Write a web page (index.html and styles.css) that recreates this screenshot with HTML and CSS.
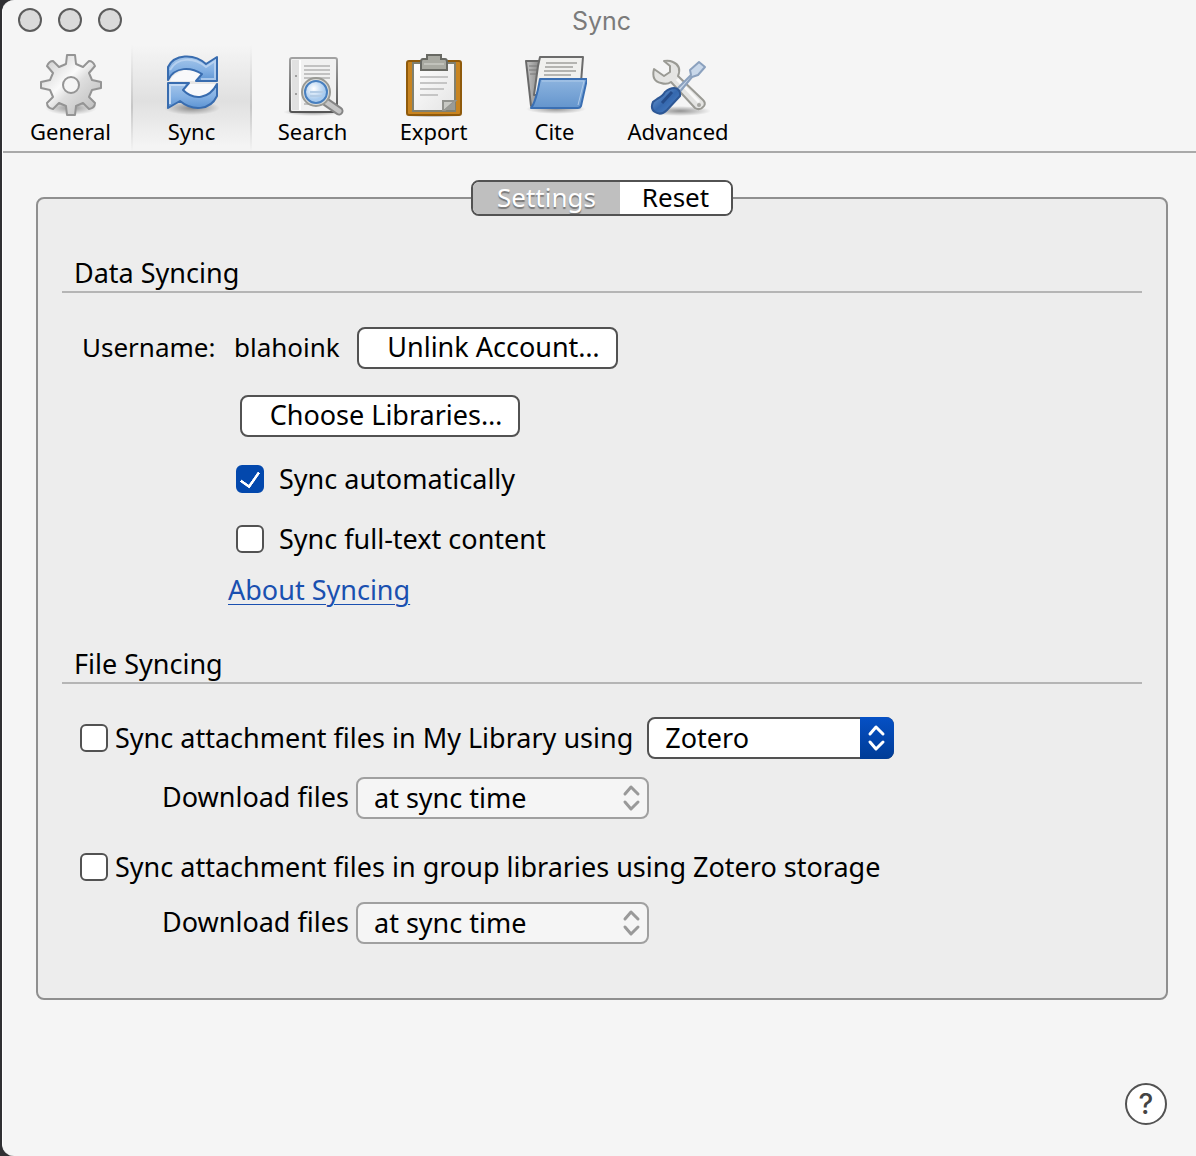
FILE: index.html
```
<!DOCTYPE html>
<html lang="en">
<head>
<meta charset="utf-8">
<meta name="viewport" content="width=device-width, initial-scale=1">
<title>Sync</title>
<link rel="stylesheet" href="styles.css">
</head>
<body>
<div class="window">
  <header class="header">
    <div class="titlebar">
      <div class="lights">
        <button class="light" type="button" aria-label="Close"></button>
        <button class="light" type="button" aria-label="Minimize"></button>
        <button class="light" type="button" aria-label="Zoom"></button>
      </div>
      <h1 class="title">Sync</h1>
    </div>
    <nav class="toolbar">
      <button class="tool" type="button">
        <svg class="tool-icon" viewBox="0 0 64 64" aria-hidden="true">
          <defs>
            <linearGradient id="gear" x1="0" y1="0" x2="1" y2="1"><stop offset="0.15" stop-color="#d8d8d8"/><stop offset="0.42" stop-color="#fafafa"/><stop offset="0.55" stop-color="#dedede"/><stop offset="0.85" stop-color="#c4c4c4"/></linearGradient>
            <radialGradient id="shade"><stop offset="0" stop-color="#000" stop-opacity="0.4"/><stop offset="1" stop-color="#000" stop-opacity="0"/></radialGradient>
          </defs>
          <ellipse cx="32" cy="55" rx="26" ry="7" fill="url(#shade)"/>
          <path fill="url(#gear)" fill-rule="evenodd" stroke="#949494" stroke-width="2" stroke-linejoin="round" d="M28 2H36L37 11L44 14L50 8Q54 8 56 13L50 20L53 27L62 29V35L53 37L50 44L56 50Q56 55 50 56L44 50L37 53L36 62H28L27 53L20 50L14 56Q8 55 8 50L14 44L11 37L2 35V29L11 27L14 20L8 13Q10 8 14 8L20 14L27 11ZM32 24A8 8 0 1 0 32 40A8 8 0 1 0 32 24Z"/>
        </svg>
        <span>General</span>
      </button>
      <button class="tool tool-selected" type="button" aria-current="page">
        <svg class="tool-icon" viewBox="0 0 64 64" aria-hidden="true">
          <defs>
            <linearGradient id="arrow" x1="0" y1="0" x2="0" y2="1"><stop offset="0" stop-color="#a5c6ea"/><stop offset="0.55" stop-color="#83b0e3"/><stop offset="1" stop-color="#5d94d3"/></linearGradient>
          </defs>
          <ellipse cx="32" cy="55" rx="28" ry="7" fill="url(#shade)"/>
          <path d="M20 19Q32 12 42 21L36 28H10Q12 22 20 19ZM23 37L29 31H56Q53 39 44 43Q32 46 23 37Z" fill="#f8f9fb"/>
          <path d="M8 27V14C14 1 34 0 46 11L57 4V28H36L42 21C31 14 15 13 8 27Z" fill="url(#arrow)" stroke="#386caf" stroke-width="2" stroke-linejoin="round"/>
          <path d="M10 17C17 4 34 4 46 14L55 8V26H41" fill="none" stroke="#c4daf3" stroke-opacity="0.7" stroke-width="2"/>
          <path d="M57 31V43C50 58 32 58 20 48L8 55V30H29L23 37C34 48 49 46 57 31Z" fill="url(#arrow)" stroke="#386caf" stroke-width="2" stroke-linejoin="round"/>
          <path d="M10 51V32H25" fill="none" stroke="#c4daf3" stroke-width="2"/>
        </svg>
        <span>Sync</span>
      </button>
      <button class="tool" type="button">
        <svg class="tool-icon" viewBox="0 0 64 64" aria-hidden="true">
          <defs>
            <linearGradient id="pageEdge" x1="0" y1="0" x2="0" y2="1"><stop offset="0" stop-color="#a2a2a2"/><stop offset="1" stop-color="#555"/></linearGradient>
            <radialGradient id="lens" cx="0.4" cy="0.35"><stop offset="0" stop-color="#fff"/><stop offset="1" stop-color="#a9cbee"/></radialGradient>
          </defs>
          <ellipse cx="32" cy="59" rx="30" ry="4" fill="url(#shade)"/>
          <rect x="9" y="5" width="47" height="54" rx="2" fill="#f1f1f1" stroke="url(#pageEdge)" stroke-width="2"/>
          <path d="M11 7H18V57H11Z" fill="#e1e1e1"/>
          <path d="M19 7V57" stroke="#fff" stroke-width="2"/>
          <circle cx="15" cy="23" r="1" fill="#888"/><circle cx="15" cy="41" r="1" fill="#888"/>
          <path d="M23 13H49M23 17H49M23 21H49M23 25H49M23 51H42" stroke="#c2c2c2" stroke-width="2"/>
          <path d="M45 49L58 58" stroke="#858585" stroke-width="9" stroke-linecap="round"/>
          <path d="M45 49L58 58" stroke="#c5c5c5" stroke-width="5" stroke-linecap="round"/>
          <circle cx="35" cy="39" r="14" fill="#ddddd9" stroke="#999a95" stroke-width="2"/>
          <circle cx="35" cy="39" r="11" fill="url(#lens)" stroke="#477fbf" stroke-width="2"/>
          <path d="M29 39H42M29 43H41" stroke="#b4cce5" stroke-width="2"/>
        </svg>
        <span>Search</span>
      </button>
      <button class="tool" type="button">
        <svg class="tool-icon" viewBox="0 0 64 64" aria-hidden="true">
          <defs>
            <linearGradient id="sheet" x1="0" y1="0" x2="1" y2="1"><stop offset="0" stop-color="#fff"/><stop offset="1" stop-color="#e4e4e4"/></linearGradient>
          </defs>
          <ellipse cx="32" cy="62" rx="30" ry="3" fill="url(#shade)"/>
          <rect x="5" y="8" width="54" height="54" rx="2" fill="#c88420" stroke="#8f5a0b" stroke-width="2"/>
          <path d="M11 10H53V58H11Z" fill="url(#sheet)" stroke="#80806f" stroke-width="2"/>
          <path d="M18 24H46M18 30H45M18 36H42M18 42H36" stroke="#c5c5c5" stroke-width="2"/>
          <path d="M41 57V48H53L43 57Z" fill="#c8c9c4" stroke="#92938e" stroke-width="2"/>
          <path d="M42 57L53 48V57Z" fill="#9a9b96"/>
          <path d="M25 2H39V6H43Q45 6 45 9V17H19V9Q19 6 21 6H25Z" fill="#a9aaa2" stroke="#686963" stroke-width="2"/>
          <path d="M22 11H42" stroke="#c1c2bb" stroke-width="2"/>
        </svg>
        <span>Export</span>
      </button>
      <button class="tool" type="button">
        <svg class="tool-icon" viewBox="0 0 64 64" aria-hidden="true">
          <defs>
            <linearGradient id="folder" x1="0" y1="0" x2="0" y2="1"><stop offset="0" stop-color="#8db4df"/><stop offset="1" stop-color="#6495cd"/></linearGradient>
            <linearGradient id="folderBack" x1="0" y1="0" x2="1" y2="0"><stop offset="0" stop-color="#c6c6c6"/><stop offset="1" stop-color="#777"/></linearGradient>
          </defs>
          <ellipse cx="33" cy="56" rx="30" ry="5" fill="url(#shade)"/>
          <path d="M3 8H20V53H8Z" fill="url(#folderBack)" stroke="#686868" stroke-width="2" stroke-linejoin="round"/>
          <path d="M6 13H15M6 17H14M7 21H13" stroke="#777"/>
          <path d="M17 4H60L57 42H11L15 13Z" fill="#f0f0ee" stroke="#6b6b6b" stroke-width="2" stroke-linejoin="round"/>
          <path d="M23 10H54M22 14H50M21 18H53M21 22H48" stroke="#b4b4b1" stroke-width="2"/>
          <path d="M17 26H64L58 53Q57 55 55 55H8Q13 49 17 26Z" fill="url(#folder)" stroke="#3a6fb3" stroke-width="2" stroke-linejoin="round"/>
          <path d="M19 28H61L55 52" fill="none" stroke="#afcbea" stroke-width="1"/>
        </svg>
        <span>Cite</span>
      </button>
      <button class="tool tool-wide" type="button">
        <svg class="tool-icon" viewBox="0 0 64 64" aria-hidden="true">
          <defs>
            <linearGradient id="handle" x1="0" y1="0" x2="1" y2="1"><stop offset="0" stop-color="#7fa9dc"/><stop offset="0.5" stop-color="#3568ae"/><stop offset="1" stop-color="#5487ca"/></linearGradient>
          </defs>
          <ellipse cx="34" cy="58" rx="31" ry="5" fill="url(#shade)"/>
          <path d="M18 8L24 13L24 19L18 23L8 16Q5 28 15 30Q21 32 25 29L49 55Q54 58 58 53Q60 50 57 47L32 23Q36 13 27 9Q23 7 18 8Z" fill="#e4e4e2" stroke="#9a9a94" stroke-width="2" stroke-linejoin="round"/>
          <path d="M31 26L53 49" stroke="#f8f8f7" stroke-width="3"/>
          <circle cx="53" cy="52" r="2" fill="#a6a6a1"/>
          <path d="M29 38L45 22L44 17L53 9L59 14L52 22L46 24L32 41Z" fill="#c9d8ea" stroke="#8ba1be" stroke-width="2" stroke-linejoin="round"/>
          <path d="M7 49Q4 56 9 59Q15 63 21 57L34 43Q35 36 28 35Q24 35 19 39Q17 43 11 46Z" fill="url(#handle)" stroke="#2d5795" stroke-width="2"/>
          <path d="M16 50L26 39" stroke="#254c8a" stroke-width="3"/>
        </svg>
        <span>Advanced</span>
      </button>
    </nav>
  </header>

  <main class="content">
    <div class="tabs" role="tablist">
      <button class="tab tab-selected" type="button" role="tab" aria-selected="true">Settings</button>
      <button class="tab" type="button" role="tab" aria-selected="false">Reset</button>
    </div>
    <div class="panel">
      <section>
        <h2 class="heading">Data Syncing</h2>
        <div class="account">
          <div class="row">
            <span class="user-label">Username:</span>
            <span class="user-name">blahoink</span>
            <button class="btn btn-unlink" type="button">Unlink Account…</button>
          </div>
          <button class="btn btn-choose" type="button">Choose Libraries…</button>
          <label class="option"><input class="check" type="checkbox" checked>Sync automatically</label>
          <label class="option option-last"><input class="check" type="checkbox">Sync full-text content</label>
          <a class="link" href="#about">About Syncing</a>
        </div>
      </section>
      <section>
        <h2 class="heading">File Syncing</h2>
        <div class="files">
          <div class="row">
            <label class="file-option"><input class="check" type="checkbox">Sync attachment files in My Library using</label>
            <span class="picker picker-storage">
              <select class="select" aria-label="Storage"><option>Zotero</option><option>WebDAV</option></select>
              <svg class="arrows" viewBox="0 0 34 42" aria-hidden="true"><path d="M10 17L16 10L23 17M10 25L16 32L23 25"/></svg>
            </span>
          </div>
          <div class="row row-download">
            <label for="download-mine">Download files</label>
            <span class="picker picker-disabled">
              <select class="select" id="download-mine" disabled><option>at sync time</option><option>as needed</option></select>
              <svg class="arrows" viewBox="0 0 34 42" aria-hidden="true"><path d="M10 17L16 10L23 17M10 25L16 32L23 25"/></svg>
            </span>
          </div>
          <div class="row row-group">
            <label class="file-option"><input class="check" type="checkbox">Sync attachment files in group libraries using Zotero storage</label>
          </div>
          <div class="row row-download">
            <label for="download-group">Download files</label>
            <span class="picker picker-disabled">
              <select class="select" id="download-group" disabled><option>at sync time</option><option>as needed</option></select>
              <svg class="arrows" viewBox="0 0 34 42" aria-hidden="true"><path d="M10 17L16 10L23 17M10 25L16 32L23 25"/></svg>
            </span>
          </div>
        </div>
      </section>
    </div>
  </main>
  <footer class="footer">
    <button class="help" type="button" aria-label="Help">?</button>
  </footer>
</div>
</body>
</html>
```
FILE: styles.css
```
* { box-sizing: border-box; }

body {
  margin: 0;
  background: #303033;
  color: #000;
  font: 27px/34px "Noto Sans", "Open Sans", sans-serif;
}

button, select { margin: 0; padding: 0; color: inherit; font: inherit; }
h1, h2 { margin: 0; font-weight: 400; }

.window {
  display: flex;
  flex-direction: column;
  min-height: 100vh;
  margin-left: 2px;
  border-left: 1px solid #fff;
  border-radius: 12px 0 0 12px;
  background: #f5f5f5;
}

/* Title bar and toolbar */
.header { border-bottom: 2px solid #a9a9a9; }

.titlebar {
  display: grid;
  grid-template-columns: 1fr auto 1fr;
  align-items: center;
  height: 40px;
  padding-left: 4px;
}
.lights { display: flex; gap: 16px; padding-left: 11px; }
.light {
  width: 24px;
  height: 24px;
  border: 2px solid #5c5c5c;
  border-radius: 50%;
  background: #dadada;
}
.title {
  padding-top: 2px;
  color: #7b7b7b;
  font: 25px/34px Inter, "Liberation Sans", sans-serif;
}

.toolbar { display: flex; height: 111px; padding-left: 7px; }
.tool {
  display: flex;
  flex-direction: column;
  align-items: center;
  width: 121px;
  padding-top: 13px;
  border: 0;
  background: none;
  font-size: 22px;
  line-height: 28px;
}
.tool-wide { width: 126px; }
.tool-selected {
  border: solid;
  border-width: 0 2px;
  border-image: linear-gradient(#f5f5f5 5%, #c6c6c6 60%, #f5f5f5) 1;
  background: linear-gradient(#f5f5f5 5%, #e0e0e0 55%, #f4f4f4 95%);
}
.tool-icon { width: 64px; height: 64px; }

/* Tabs sit across the panel's top border */
.content { padding: 27px 28px 0 33px; }
.tabs {
  position: relative;
  display: flex;
  width: 262px;
  height: 36px;
  margin: 0 auto -19px;
  overflow: hidden;
  border: 2px solid #525252;
  border-radius: 8px;
  background: #fff;
}
.tab { flex: 1; border: 0; background: #fff; font-size: 26px; line-height: 30px; padding-bottom: 2px; }
.tab-selected {
  flex: 0 0 147px;
  background: #bfbfbf;
  color: #fff;
  text-shadow: 0 2px 1px #777;
}

.panel {
  padding: 58px 24px 54px;
  border: 2px solid #8f8f8f;
  border-radius: 8px;
  background: #ededed;
}
.heading {
  padding: 0 12px 2px;
  border-bottom: 2px solid #b5b5b5;
  font-size: 27px;
  line-height: 32px;
}
.row { display: flex; align-items: center; min-height: 42px; }

/* Data syncing */
.account {
  display: flex;
  flex-direction: column;
  align-items: flex-start;
  padding: 34px 0 40px 20px;
}
.user-label { width: 152px; padding-bottom: 2px; font-size: 26px; }
.user-name { width: 123px; padding-bottom: 2px; font-size: 26px; }
.btn {
  height: 42px;
  padding: 0 0 2px 12px;
  border: 2px solid #525252;
  border-radius: 8px;
  background: #fff;
}
.btn-unlink { width: 261px; }
.btn-choose { width: 280px; margin: 26px 0 0 158px; }

.option {
  display: flex;
  align-items: center;
  gap: 15px;
  height: 28px;
  margin: 28px 0 0 154px;
}
.option-last { margin-top: 32px; }
.check {
  display: grid;
  flex: none;
  place-items: center;
  width: 28px;
  height: 28px;
  margin: 0;
  appearance: none;
  border: 2px solid #525252;
  border-radius: 6px;
  background: #fff;
}
.check:checked { border-color: #0348ad; background: #0348ad; }
.check:checked::after {
  content: "";
  width: 9px;
  height: 16px;
  margin-bottom: 3px;
  border: solid #fff;
  border-width: 0 3px 3px 0;
  border-radius: 1px;
  transform: rotate(35deg);
}
.link {
  margin: 20px 0 1px 146px;
  color: #1a50b0;
  text-decoration-thickness: 1px;
  text-underline-offset: 4px;
}

/* File syncing */
.files { padding: 33px 0 0 18px; }
.file-option { display: flex; align-items: center; gap: 7px; }
.row-download { margin-top: 18px; padding-left: 82px; }
.row-download label { width: 194px; padding-bottom: 2px; }
.row-group { margin-top: 27px; }
.row-group + .row-download { margin-top: 14px; }

.picker { display: grid; width: 293px; height: 42px; }
.picker-storage { width: 247px; margin-left: 14px; }
.select {
  grid-area: 1 / 1;
  padding-left: 16px;
  appearance: none;
  border: 2px solid #525252;
  border-radius: 8px;
  background: #fff;
  opacity: 1;
}
.arrows {
  grid-area: 1 / 1;
  justify-self: end;
  width: 34px;
  height: 42px;
  border-radius: 0 8px 8px 0;
  background: linear-gradient(#0550c5, #003c96);
  fill: none;
  stroke: #fff;
  stroke-width: 3;
  stroke-linecap: round;
  stroke-linejoin: round;
  pointer-events: none;
}
.picker-disabled .select { border-color: #a0a0a0; background: #f5f5f5; color: #000; }
.picker-disabled .arrows { background: none; stroke: #999; }

.footer {
  display: flex;
  justify-content: flex-end;
  margin-top: auto;
  padding: 24px 29px 31px;
}
.help {
  width: 42px;
  height: 42px;
  border: 2px solid #525252;
  border-radius: 50%;
  background: #fff;
  color: #444;
  font: 500 28px/36px Inter, sans-serif;
}
```
